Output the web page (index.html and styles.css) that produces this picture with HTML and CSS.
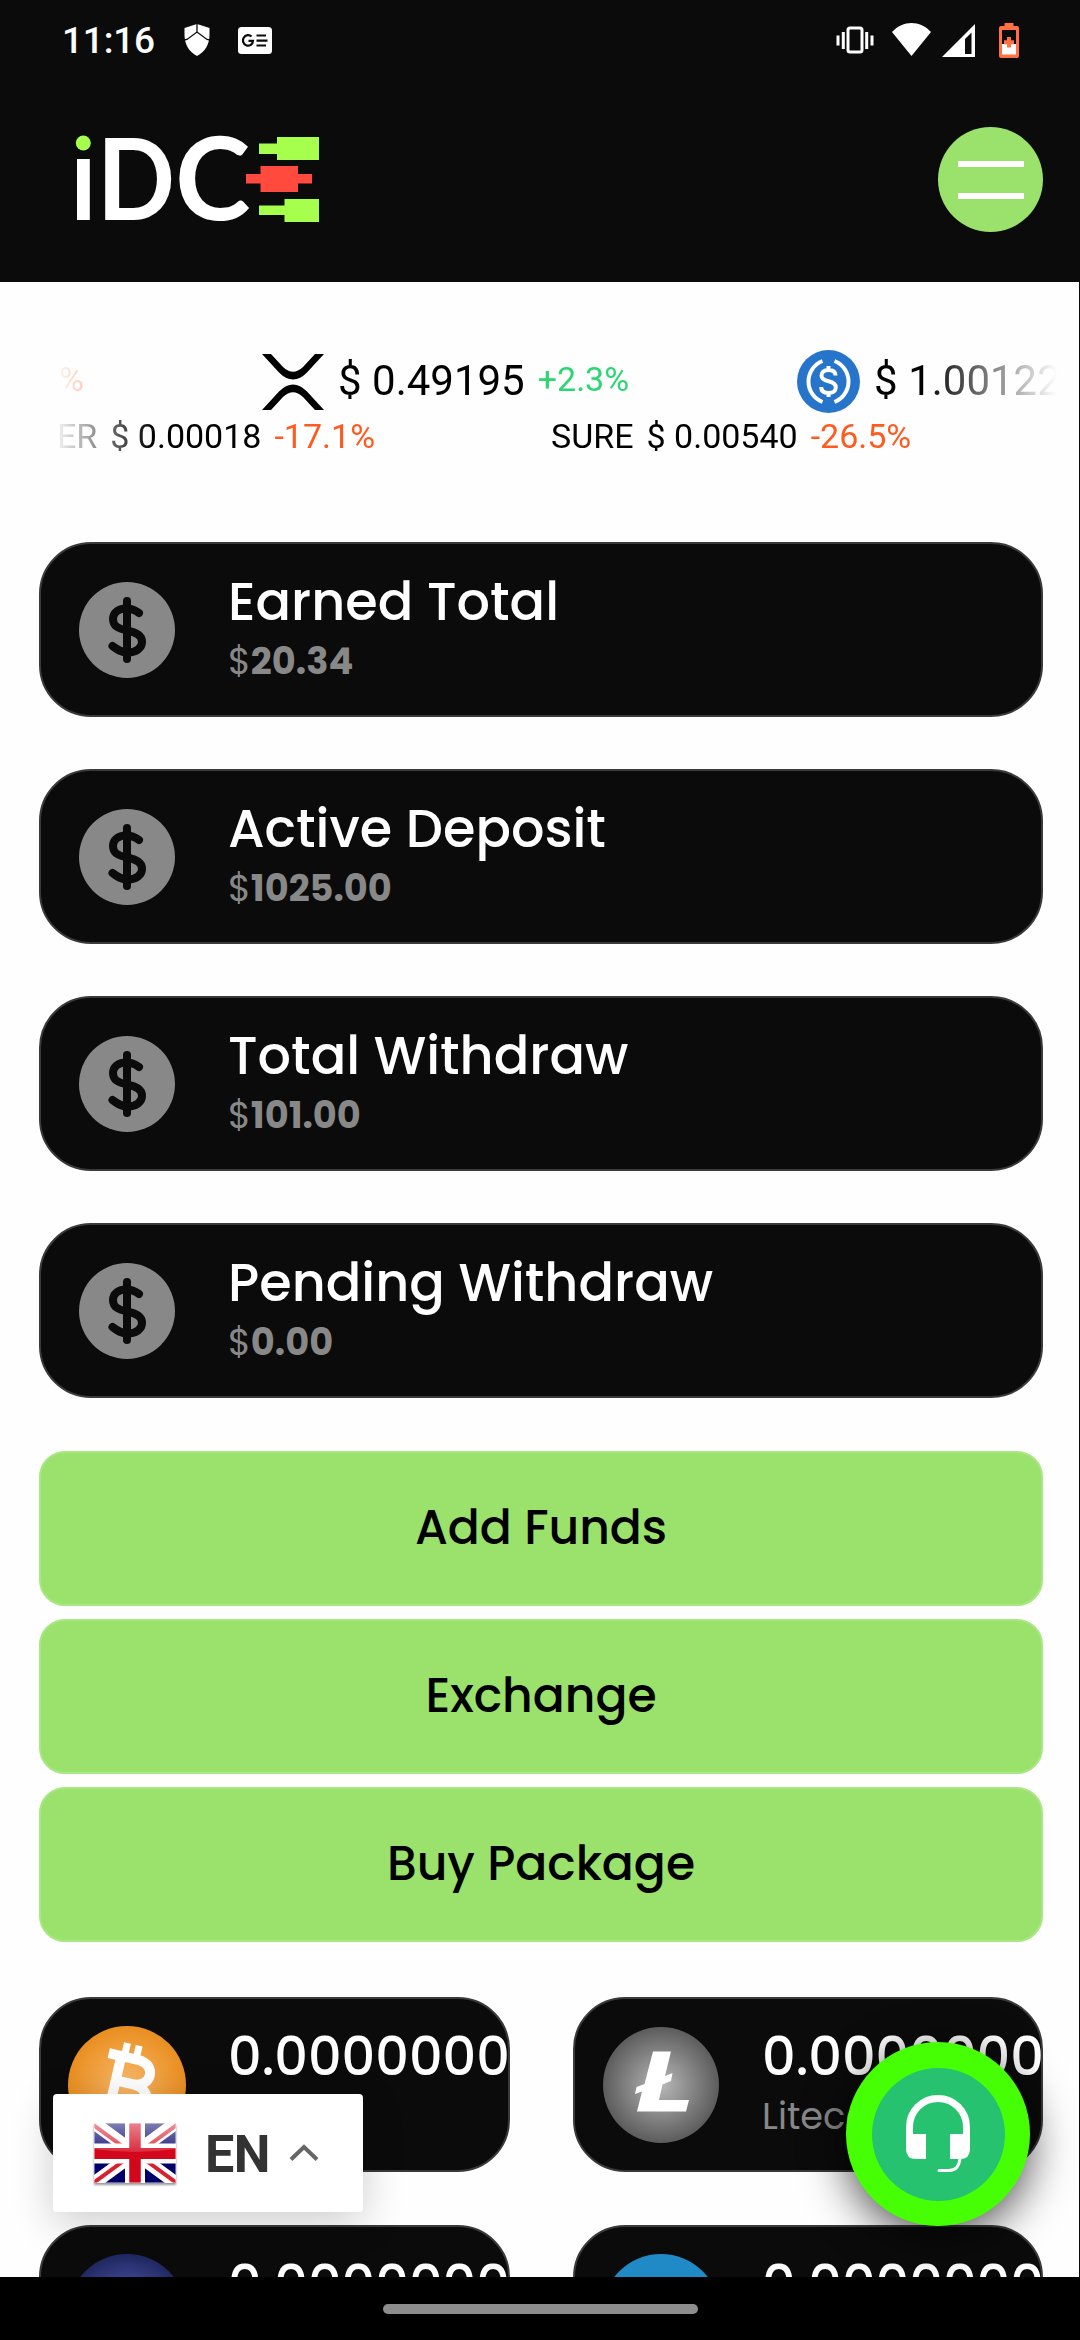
FILE: index.html
```html
<!DOCTYPE html>
<html lang="en">
<head>
<meta charset="utf-8">
<title>iDCE</title>
<link rel="stylesheet" href="styles.css">
</head>
<body>
<svg class="defs" aria-hidden="true">
  <symbol id="coin" viewBox="0 0 96 96">
    <circle cx="48" cy="48" r="48" fill="#888"/>
    <g fill="none" stroke="#0b0b0b" stroke-width="8" stroke-linecap="round" stroke-linejoin="round">
      <path d="M48 19v58"/>
      <path d="M60 31C56 28 52 26.500 47 26.500C39 26.500 34 31 34 37C34 44 39 46.500 48 48.500C57 50.500 63 53 63 60C63 66 57 70.500 49 70.500C42 70.500 38 67.500 33.500 64"/>
    </g>
  </symbol>
</svg>
<div class="screen">
  <header class="header">
    <div class="status">
      <div class="status-left">
        <span class="time">11:16</span>
        <svg class="ic-shield" viewBox="0 0 26 32" width="26" height="32"><path fill="#fff" d="M13 0L25.500 4V11C25.500 20 21 28 13 32C5 28 .5 20 .5 11V4z"/><path d="M13 0V8M0 16L3 15.500L13 8L23 15.500L26 16" fill="none" stroke="#0b0b0b" stroke-width="1.300"/></svg>
        <svg class="ic-news" viewBox="0 0 34 27" width="34" height="27"><rect width="34" height="27" rx="3.500" fill="#fff"/><path d="M13.500 9.600A5 5.300 0 1 0 15 13.800H10.500M18.500 8.500h9.500M18.500 13.700h11M18.500 18.500h9.500" fill="none" stroke="#0b0b0b" stroke-width="2.200"/></svg>
      </div>
      <div class="status-right">
        <svg viewBox="0 0 38 28" width="38" height="28" fill="none" stroke="#fff"><rect x="12" y="2" width="14" height="24" rx="2" stroke-width="3"/><path d="M7.300 6v17M30.700 6v17" stroke-width="3"/><path d="M2 9.500v10M36 9.500v10" stroke-width="3"/></svg>
        <svg class="ic-wifi" viewBox="0 0 39 33" width="39" height="33"><path fill="#fff" d="M0 9C11-3 28-3 39 9L19.500 33z"/></svg>
        <svg class="ic-signal" viewBox="0 0 33 33" width="33" height="33"><path fill="#fff" fill-rule="evenodd" d="M33 0V33H0zM29.500 8.500L23 15V30H29.500z"/></svg>
        <svg class="ic-batt" viewBox="0 0 20 35" width="20" height="35"><path fill="#ff7043" d="M5.500 0h9v3H18a2 2 0 0 1 2 2V33a2 2 0 0 1-2 2H2a2 2 0 0 1-2-2V5a2 2 0 0 1 2-2H5.500z"/><path fill="#0b0b0b" d="M3 7h14v14H3z"/><path fill="#fff" d="M3 21h14v10.500H3z"/><path d="M10 14v10.500M5 19.200h10" stroke="#ff7043" stroke-width="4"/></svg>
      </div>
    </div>
    <div class="bar">
      <svg class="logo" viewBox="0 0 246 92" width="246" height="92">
        <circle cx="8.300" cy="11" r="7.500" fill="#a6ff4d"/>
        <rect x="2" y="27" width="12.800" height="61" fill="#fff"/>
        <text class="logo-text" transform="translate(22 88) scale(.9 1)">D</text>
        <text class="logo-text" x="175.500" y="88" text-anchor="end">C</text>
        <path fill="#a6ff4d" d="M184 11.500h18V5h42v23h-42V22h-18zM184 73.500h25.500V67H244v23h-34.500V83H184z"/>
        <path fill="#ff4a3d" d="M171 42h14.500v-8H223v8h14v9.500h-14V60h-37.500v-8.500H171z"/>
      </svg>
      <div class="menu"><span></span><span></span></div>
    </div>
  </header>

  <main class="page">
    <div class="ticker">
      <div class="line coins">
        <span class="pct down first">%</span>
        <div class="coin-item xrp">
          <svg viewBox="0 0 62 56" width="62" height="56"><path fill="#000" d="M0 0H9L21 13Q31 22.500 41 13L53 0H62L45 18.500Q31 32.500 17 18.500zM0 56H9L21 43Q31 33.500 41 43L53 56H62L45 37.500Q31 23.500 17 37.500z"/></svg>
          <span class="price">$ 0.49195</span><span class="pct up">+2.3%</span>
        </div>
        <div class="coin-item usdc">
          <svg viewBox="0 0 63 63" width="63" height="63"><circle cx="31.500" cy="31.500" r="31.500" fill="#2775ca"/><g fill="none" stroke="#fff" stroke-width="4"><path d="M25.500 11A22 22 0 0 0 25.500 52M37.500 11A22 22 0 0 1 37.500 52"/><path d="M38.500 25.500C38.500 21.500 35.500 20 31.500 20C27 20 24.500 22.500 24.500 25.500C24.500 29.500 28 30.500 31.500 31.200C35.500 32 38.800 33.500 38.800 37.500C38.800 41 35.500 43 31.500 43C27 43 24.200 41 24.200 37M31.500 16v5M31.500 42v5"/></g></svg>
          <span class="price">$ 1.00122</span>
        </div>
      </div>
      <div class="line tokens">
        <div class="token"><span>ER</span><span>$ 0.00018</span><span class="down">-17.1%</span></div>
        <div class="token"><span>SURE</span><span>$ 0.00540</span><span class="down">-26.5%</span></div>
      </div>
    </div>

    <section class="stats">
      <article class="card"><div class="icon"><svg width="96" height="96"><use href="#coin"/></svg></div><div class="body"><h2>Earned Total</h2><p>$<b>20.34</b></p></div></article>
      <article class="card"><div class="icon"><svg width="96" height="96"><use href="#coin"/></svg></div><div class="body"><h2>Active Deposit</h2><p>$<b>1025.00</b></p></div></article>
      <article class="card"><div class="icon"><svg width="96" height="96"><use href="#coin"/></svg></div><div class="body"><h2>Total Withdraw</h2><p>$<b>101.00</b></p></div></article>
      <article class="card"><div class="icon"><svg width="96" height="96"><use href="#coin"/></svg></div><div class="body"><h2>Pending Withdraw</h2><p>$<b>0.00</b></p></div></article>
    </section>

    <section class="actions">
      <button>Add Funds</button>
      <button>Exchange</button>
      <button>Buy Package</button>
    </section>

    <section class="wallets">
      <article class="card"><div class="icon">
        <svg viewBox="0 0 118 118" width="118" height="118"><defs><radialGradient id="g1"><stop offset="0" stop-color="#f9b96b"/><stop offset="1" stop-color="#e98e20"/></radialGradient></defs><circle cx="59" cy="59" r="59" fill="url(#g1)"/><g transform="rotate(13 59 59)" fill="none" stroke="#fff"><path d="M34 32H64C84 32 84 57 64 57H48M64 57C88 57 88 86 64 86H34M47 32V86" stroke-width="10"/><path d="M50 18v12M62 18v12M50 88v12M62 88v12" stroke-width="7"/></g></svg>
      </div><div class="body"><h2>0.0000000</h2></div></article>
      <article class="card"><div class="icon">
        <svg viewBox="0 0 116 116" width="116" height="116"><defs><radialGradient id="g2"><stop offset="0" stop-color="#b8b8b8"/><stop offset="1" stop-color="#5c5c5c"/></radialGradient></defs><circle cx="58" cy="58" r="58" fill="url(#g2)"/><path fill="#fff" d="M50 24.500H68L62 49L69.500 46L68 54L59.500 57.500L56 73H86L83 84.500H34L39 64.500L32 67L33.500 60L41.500 57z"/></svg>
      </div><div class="body"><h2>0.0000000</h2><p>Litecoin</p></div></article>
      <article class="card"><div class="icon">
        <svg viewBox="0 0 118 118" width="118" height="118"><defs><radialGradient id="g3"><stop offset="0" stop-color="#5a62c8"/><stop offset="1" stop-color="#20285f"/></radialGradient></defs><circle cx="59" cy="59" r="59" fill="url(#g3)"/></svg>
      </div><div class="body"><h2>0.0000000</h2></div></article>
      <article class="card"><div class="icon">
        <svg viewBox="0 0 118 118" width="118" height="118"><circle cx="59" cy="59" r="59" fill="#1f8ac5"/></svg>
      </div><div class="body"><h2>0.0000000</h2></div></article>
    </section>
  </main>

  <footer class="navbar"><span class="handle"></span></footer>

  <div class="lang">
    <svg class="flag" viewBox="0 0 82 60" width="82" height="60">
      <defs><linearGradient id="gloss" x1="0" y1="0" x2="0" y2="1"><stop offset="0" stop-color="#fff" stop-opacity=".5"/><stop offset="1" stop-color="#fff" stop-opacity=".15"/></linearGradient><clipPath id="fc"><rect width="82" height="60"/></clipPath></defs>
      <g clip-path="url(#fc)"><rect width="82" height="60" fill="#00006b"/><path d="M0 0L82 60M82 0L0 60" stroke="#fff" stroke-width="13"/><path d="M-2 1L39 31M84 1L43 31M-2 61L39 31M84 61L43 31" stroke="#d9202f" stroke-width="4"/><path d="M41 0V60M0 30.500H82" stroke="#fff" stroke-width="20"/><path d="M41 0V60" stroke="#d4061c" stroke-width="11.500"/><path d="M0 30.500H82" stroke="#d4061c" stroke-width="11"/><path d="M0 0H82V26Q41 32 0 26z" fill="url(#gloss)"/></g>
      <rect x=".5" y=".5" width="81" height="59" fill="none" stroke="#fff" stroke-opacity=".4"/>
    </svg>
    <span class="lang-code">EN</span>
    <svg class="chev" viewBox="0 0 30 18" width="30" height="18"><path d="M2 15.500L15 3L28 15.500" fill="none" stroke="#666" stroke-width="4"/></svg>
  </div>

  <div class="chat"><div class="chat-in">
    <svg viewBox="0 0 64 78" width="64" height="78"><path d="M3.500 43V32A28.500 28.500 0 0 1 60.500 32V43" fill="none" stroke="#fff" stroke-width="7"/><path fill="#fff" d="M0 39H20V64H10Q0 64 0 54zM44 39H64V54Q64 64 54 64H44z"/><path d="M54 63Q53 75.500 43 75.500H33" fill="none" stroke="#fff" stroke-width="3" stroke-linecap="round"/></svg>
  </div></div>
</div>
</body>
</html>
```
FILE: styles.css
```css
* { box-sizing: border-box; margin: 0; padding: 0; }
body { background: #fefefe; font-family: Roboto, sans-serif; }
svg { display: block; flex: none; }
.defs { position: absolute; width: 0; height: 0; }

.screen { position: relative; width: 1080px; height: 2340px; overflow: hidden; display: flex; flex-direction: column; }

.header { height: 282px; background: #0b0b0b; flex: none; }
.status { height: 80px; display: flex; justify-content: space-between; padding: 0 61px 0 62px; }
.status-left, .status-right { display: flex; align-items: center; }
.time { color: #fff; font-size: 37px; font-weight: 500; letter-spacing: -0.2px; line-height: 80px; width: 122px; padding-top: 1px; }
.ic-news { margin-left: 28px; }
.ic-wifi { margin: -2px 11px 0 18px; }
.ic-batt { margin-left: 24px; }

.bar { display: flex; justify-content: space-between; align-items: flex-start; padding: 47px 37px 0 75px; }
.logo { margin-top: 5px; overflow: visible; }
.logo-text { font-family: Lato, sans-serif; font-weight: 700; font-size: 114px; fill: #fff; }
.menu { width: 105px; height: 105px; border-radius: 50%; background: #9ae26b; display: flex; flex-direction: column; align-items: center; justify-content: center; gap: 26px; }
.menu span { width: 66px; height: 6px; background: #fff; }

.page { height: 1995px; flex: none; overflow: hidden; border-right: 1px solid #0b0b0b; padding: 65px 36px 0 39px; }

.ticker { height: 195px; margin: 0 -14px 0 14px; overflow: hidden; color: #000;
  -webkit-mask-image: linear-gradient(to right, transparent, #000 100px, #000 870px, transparent 1004px);
  mask-image: linear-gradient(to right, transparent, #000 100px, #000 870px, transparent 1004px); }
.line { display: flex; white-space: nowrap; }
.line > * { flex: none; }
.coins { height: 69px; align-items: center; }
.coin-item { display: flex; align-items: center; }
.price { font-size: 42px; line-height: 64px; padding-bottom: 2px; margin-left: 14px; }
.pct { font-size: 34px; line-height: 58px; padding-bottom: 6px; }
.first { width: 209px; padding-left: 6px; }
.up { color: #2bd673; margin-left: 13px; }
.down { color: #ff5a1f; }
.usdc { margin-left: 168px; }
.tokens { height: 40px; font-size: 34px; line-height: 40px; padding-left: 4px; }
.token { display: flex; gap: 13px; width: 494px; }

.card { height: 175px; border: 2px solid #3a3a3a; border-radius: 52px; background: #0b0b0b; display: flex; overflow: hidden; }
.icon { width: 172px; display: flex; align-items: center; justify-content: center; flex: none; }
.body { padding: 28px 0 0 15px; font-family: Poppins, Inter, sans-serif; white-space: nowrap; }
.body h2 { font-size: 52.500px; line-height: 60px; font-weight: 500; color: #fff; }
.body p { font-size: 36.750px; line-height: 50px; margin-top: 4px; color: #888; font-weight: 400; }
.body b { font-weight: 700; }
.stats { display: flex; flex-direction: column; gap: 52px; }

.actions { display: flex; flex-direction: column; gap: 13px; margin-top: 53px; }
.actions button { height: 155px; border: 2px solid #a9e684; border-radius: 26px; padding-bottom: 2px; background: #9ae26b; color: #000; font: 500 47.250px Poppins, Inter, sans-serif; }

.wallets { display: grid; grid-template-columns: 471px 470px; column-gap: 63px; row-gap: 53px; margin-top: 55px; }

.navbar { height: 63px; background: #000; flex: none; display: flex; align-items: center; justify-content: center; }
.handle { width: 315px; height: 10px; border-radius: 5px; background: #8d8d8d; }

.lang { position: absolute; left: 53px; top: 2094px; width: 310px; height: 118px; background: #fff; border-radius: 4px; display: flex; align-items: center; padding-left: 41px; box-shadow: 0 10px 42px rgba(0,0,0,.2); clip-path: inset(-60px -60px -65px -60px); }
.flag { filter: drop-shadow(0 2px 1px rgba(0,0,0,.4)); }
.lang-code { font-size: 52px; font-weight: 700; color: #333; margin-left: 29px; width: 84px; padding-top: 2px; letter-spacing: -0.5px; }

.chat { position: absolute; left: 846px; top: 2042px; width: 184px; height: 184px; border-radius: 50%; background: #46ff04; display: flex; align-items: center; justify-content: center; box-shadow: 0 10px 45px rgba(0,0,0,.7); clip-path: inset(-60px -60px -51px -60px); }
.chat-in { width: 133px; height: 133px; border-radius: 50%; background: #27c26f; display: flex; align-items: center; justify-content: center; }
```
